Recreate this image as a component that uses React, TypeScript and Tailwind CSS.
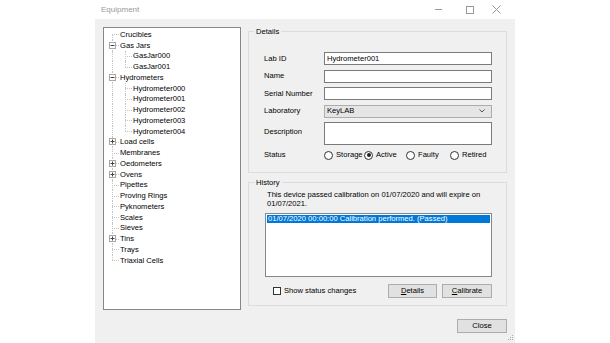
import React from "react";

type Node = { name: string; box?: "+" | "-"; children?: string[] };

const TREE: Node[] = [
  { name: "Crucibles" },
  { name: "Gas Jars", box: "-", children: ["GasJar000", "GasJar001"] },
  {
    name: "Hydrometers",
    box: "-",
    children: ["Hydrometer000", "Hydrometer001", "Hydrometer002", "Hydrometer003", "Hydrometer004"],
  },
  { name: "Load cells", box: "+" },
  { name: "Membranes" },
  { name: "Oedometers", box: "+" },
  { name: "Ovens", box: "+" },
  { name: "Pipettes" },
  { name: "Proving Rings" },
  { name: "Pyknometers" },
  { name: "Scales" },
  { name: "Sieves" },
  { name: "Tins", box: "+" },
  { name: "Trays" },
  { name: "Triaxial Cells" },
];

function Toggle({ open }: { open: boolean }) {
  return (
    <svg width="7" height="7" viewBox="0 0 7 7" className="absolute left-[3px] top-[calc(50%-3.5px)]">
      <rect x="0.5" y="0.5" width="6" height="6" fill="#fff" stroke="#a8a8a8" />
      <path d="M1.5 3.5h4" stroke="#444" />
      {!open && <path d="M3.5 1.5v4" stroke="#444" />}
    </svg>
  );
}

// one 13px column of tree lines
function Branch({ top, bottom, stub, box }: { top: boolean; bottom: boolean; stub: boolean; box?: "+" | "-" }) {
  return (
    <div className="relative w-[13px] h-full shrink-0">
      <div
        className={`absolute left-[6px] border-l border-dotted border-[#c4c4c4] ${top ? "top-0" : "top-1/2"} ${
          bottom ? "bottom-0" : "bottom-1/2"
        }`}
      />
      {stub && <div className="absolute left-[6px] top-1/2 w-[7px] border-t border-dotted border-[#c4c4c4]" />}
      {box && <Toggle open={box === "-"} />}
    </div>
  );
}

function Tree() {
  const rows: React.ReactNode[] = [];
  TREE.forEach((n, i) => {
    const first = i === 0;
    const last = i === TREE.length - 1;
    rows.push(
      <div key={n.name} className="flex h-[10.76px] items-center">
        <Branch top={!first} bottom={!last} stub box={n.box} />
        <span className="ml-[1px] whitespace-nowrap">{n.name}</span>
      </div>
    );
    n.children?.forEach((c, j) => {
      rows.push(
        <div key={c} className="flex h-[10.76px] items-center">
          <Branch top bottom stub={false} />
          <Branch top bottom={j < n.children!.length - 1} stub />
          <span className="ml-[1px] whitespace-nowrap">{c}</span>
        </div>
      );
    });
  });
  return (
    <div className="w-[138px] h-[283px] shrink-0 border border-[#828790] bg-white pl-[2px] pt-[1px] leading-[9px]">
      {rows}
    </div>
  );
}

function Field({ label, children, top }: { label: string; children: React.ReactNode; top?: boolean }) {
  return (
    <div className={`flex ${top ? "items-start" : "items-center"}`}>
      <span className={`w-[60px] shrink-0 ${top ? "pt-[4px]" : ""}`}>{label}</span>
      {children}
    </div>
  );
}

function TextBox({ value, tall }: { value?: string; tall?: boolean }) {
  return (
    <div
      className={`w-[168px] ${tall ? "h-[23px]" : "h-[13px]"} border border-[#7a7a7a] bg-white px-[2px] flex items-center`}
    >
      {value}
    </div>
  );
}

function Radio({ label, checked, w }: { label: string; checked?: boolean; w: string }) {
  return (
    <div className={`flex items-center ${w}`}>
      <span className="w-[9px] h-[9px] rounded-full border border-[#333] bg-white flex items-center justify-center">
        {checked && <span className="w-[4px] h-[4px] rounded-full bg-[#222]" />}
      </span>
      <span className="ml-[3px]">{label}</span>
    </div>
  );
}

function Button({ hot, rest, w }: { hot: string; rest: string; w: string }) {
  return (
    <div className={`${w} h-[14px] border border-[#adadad] bg-[#e1e1e1] flex items-center justify-center`}>
      <span>
        <span className="underline">{hot}</span>
        {rest}
      </span>
    </div>
  );
}

export default function App() {
  return (
    <div className="w-[610px] h-[343px] bg-white overflow-hidden text-[7.6px] text-black font-['Liberation_Sans',Arial,sans-serif]">
      <div className="ml-[95px] w-[420px] h-full flex flex-col">
        {/* title bar */}
        <div className="h-[19px] shrink-0 flex items-center pl-[6px] text-[8px] text-[#999]">
          <span>Equipment</span>
          <div className="ml-auto flex items-center pr-[14px]">
            <span className="w-[7px] border-t border-[#999]" />
            <span className="ml-[24px] w-[8px] h-[8px] border border-[#999]" />
            <svg width="9" height="9" viewBox="0 0 9 9" className="ml-[18px]">
              <path d="M0.5 0.5l8 8M8.5 0.5l-8 8" stroke="#999" />
            </svg>
          </div>
        </div>

        {/* client area */}
        <div className="relative flex-1 bg-[#f0f0f0] px-[8px] pt-[8px]">
          <div className="flex gap-[7px]">
            <Tree />

            <div className="w-[259px] flex flex-col gap-[5px]">
              <fieldset className="h-[146px] border border-[#dcdcdc]">
                <legend className="ml-[5px] px-[2px] leading-[9px]">Details</legend>
                <div className="pl-[15px] pt-[16px] flex flex-col gap-[4.5px]">
                  <Field label="Lab ID">
                    <TextBox value="Hydrometer001" />
                  </Field>
                  <Field label="Name">
                    <TextBox />
                  </Field>
                  <Field label="Serial Number">
                    <TextBox />
                  </Field>
                  <Field label="Laboratory">
                    <div className="w-[168px] h-[13px] border border-[#adadad] bg-[#e5e5e5] pl-[2px] pr-[6px] flex items-center justify-between">
                      <span>KeyLAB</span>
                      <svg width="6" height="4" viewBox="0 0 6 4">
                        <path d="M0.5 0.5l2.5 2.5 2.5-2.5" stroke="#555" fill="none" />
                      </svg>
                    </div>
                  </Field>
                  <Field label="Description" top>
                    <TextBox tall />
                  </Field>
                  <div className="flex items-center h-[11px]">
                    <span className="w-[60px] shrink-0">Status</span>
                    <Radio label="Storage" w="w-[40px]" />
                    <Radio label="Active" checked w="w-[42px]" />
                    <Radio label="Faulty" w="w-[44px]" />
                    <Radio label="Retired" w="w-[40px]" />
                  </div>
                </div>
              </fieldset>

              <fieldset className="h-[128px] border border-[#dcdcdc]">
                <legend className="ml-[5px] px-[2px] leading-[9px]">History</legend>
                <div className="pl-[16px] pt-[4px]">
                  <p className="ml-[2px] leading-[8.8px]">
                    This device passed calibration on 01/07/2020 and will expire on
                    <br />
                    01/07/2021.
                  </p>
                  <div className="mt-[4px] w-[227px] h-[64px] border border-[#828790] bg-white p-[1px]">
                    <div className="h-[8px] bg-[#0078d7] text-white px-[1px] flex items-center">
                      01/07/2020 00:00:00 Calibration performed. (Passed)
                    </div>
                  </div>
                  <div className="mt-[7px] w-[227px] h-[14px] flex items-center">
                    <span className="ml-[8px] w-[8px] h-[8px] border border-[#333] bg-white" />
                    <span className="ml-[3px]">Show status changes</span>
                    <div className="ml-auto flex gap-[5px]">
                      <Button hot="D" rest="etails" w="w-[49px]" />
                      <Button hot="C" rest="alibrate" w="w-[50px]" />
                    </div>
                  </div>
                </div>
              </fieldset>
            </div>
          </div>

          <div className="mt-[9px] flex justify-end">
            <div className="w-[50px] h-[14px] border border-[#adadad] bg-[#e1e1e1] flex items-center justify-center">
              Close
            </div>
          </div>

          {/* size grip */}
          <svg width="6" height="6" viewBox="0 0 6 6" className="absolute right-[1px] bottom-[2px]">
            <rect x="4" y="0" width="1" height="1" fill="#aaa" />
            <rect x="2" y="2" width="1" height="1" fill="#aaa" />
            <rect x="4" y="2" width="1" height="1" fill="#aaa" />
            <rect x="0" y="4" width="1" height="1" fill="#aaa" />
            <rect x="2" y="4" width="1" height="1" fill="#aaa" />
            <rect x="4" y="4" width="1" height="1" fill="#aaa" />
          </svg>
        </div>
      </div>
    </div>
  );
}
